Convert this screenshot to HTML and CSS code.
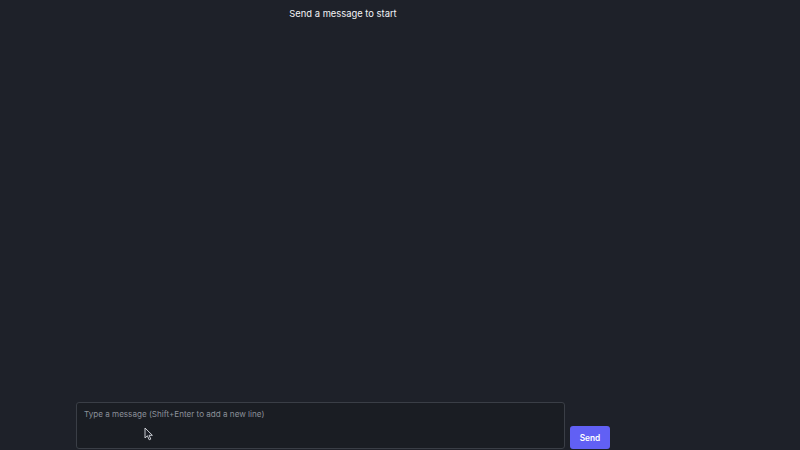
FILE: index.html
```html
<!DOCTYPE html>
<html lang="en">
<head>
  <meta charset="UTF-8">
  <title>Chat</title>
  <link rel="stylesheet" href="styles.css">
</head>
<body>
  <div class="chat">
    <div class="messages">
      <div class="empty">Send a message to start</div>
    </div>
    <form class="composer">
      <textarea class="input" placeholder="Type a message (Shift+Enter to add a new line)"></textarea>
      <button type="button" class="send">Send</button>
    </form>
  </div>

  <svg class="pointer" width="10" height="14" viewBox="0 0 10 14">
    <path d="M1 1 L1 11 L3.4 8.8 L5.2 12.8 L6.8 12.1 L5.1 8.3 L8.4 8.3 Z" fill="#1e2129" stroke="#c9ccd2" stroke-width="1"/>
  </svg>
</body>
</html>
```

FILE: styles.css
```css
/* page */
body {
  margin: 0;
  height: 100vh;
  background-color: #1e2129;
  font-family: Inter, "Noto Sans", sans-serif;
  color: #f3f4f6;
  overflow: hidden;
}

.chat {
  width: 534px;
  height: 100vh;
  margin-left: 76px;
  display: flex;
  flex-direction: column;
  box-sizing: border-box;
  padding-bottom: 1px;
}

.messages {
  flex: 1;
  padding-top: 7px;
}

.empty {
  text-align: center;
  font-size: 9.4px;
  line-height: 13px;
}

.composer {
  display: flex;
  align-items: flex-end;
  gap: 5px;
  margin: 0;
}

.input {
  flex: 1;
  height: 47px;
  box-sizing: border-box;
  resize: none;
  background-color: #1a1d23;
  border: 1px solid #3a3e46;
  border-radius: 3px;
  padding: 5px 7px;
  font-family: Inter, "Noto Sans", sans-serif;
  font-size: 8.1px;
  line-height: 12px;
  color: #e5e7eb;
  outline: none;
}

.input::placeholder {
  color: #8b9099;
}

.send {
  width: 40px;
  height: 23px;
  border: none;
  border-radius: 3px;
  background-color: #6160f4;
  color: #ffffff;
  font-family: Inter, "Noto Sans", sans-serif;
  font-size: 8.3px;
  font-weight: 600;
  cursor: pointer;
  padding: 0;
}

/* mouse pointer captured in the screenshot */
.pointer {
  position: absolute;
  left: 144px;
  top: 427px;
}
```
